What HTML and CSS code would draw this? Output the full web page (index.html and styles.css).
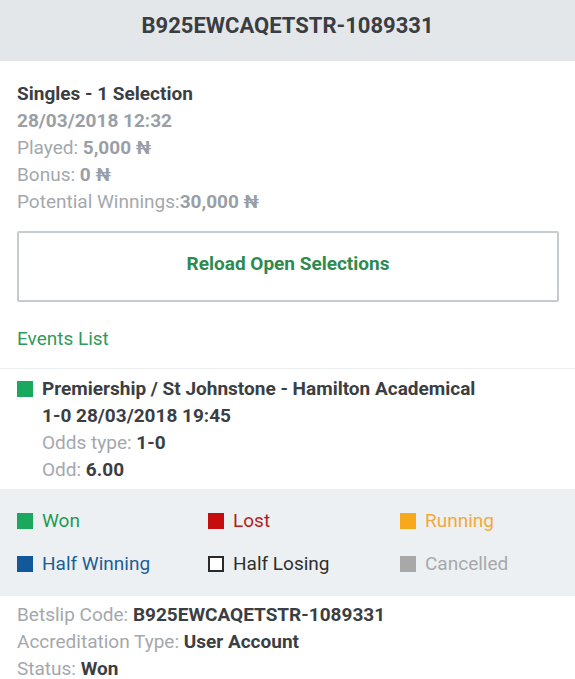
FILE: index.html
```html
<!DOCTYPE html>
<html lang="en">
<head>
  <meta charset="utf-8">
  <title>Betslip B925EWCAQETSTR-1089331</title>
  <link rel="stylesheet" href="styles.css">
</head>
<body>

  <header class="slip-header">B925EWCAQETSTR-1089331</header>

  <section class="slip-summary">
    <div class="slip-type">Singles - 1 Selection</div>
    <div class="slip-date">28/03/2018 12:32</div>
    <div class="slip-row">Played: <b>5,000 ₦</b></div>
    <div class="slip-row">Bonus: <b>0 ₦</b></div>
    <div class="slip-row">Potential Winnings:<b>30,000 ₦</b></div>

    <button class="reload-button">Reload Open Selections</button>

    <div class="events-title">Events List</div>
  </section>

  <section class="event">
    <span class="swatch swatch-won"></span>
    <div class="event-body">
      <div class="event-name">Premiership / St Johnstone - Hamilton Academical</div>
      <div class="event-name">1-0 28/03/2018 19:45</div>
      <div class="event-row">Odds type: <b>1-0</b></div>
      <div class="event-row">Odd: <b>6.00</b></div>
    </div>
  </section>

  <section class="legend">
    <div class="legend-item legend-won"><span class="swatch swatch-won"></span>Won</div>
    <div class="legend-item legend-lost"><span class="swatch swatch-lost"></span>Lost</div>
    <div class="legend-item legend-running"><span class="swatch swatch-running"></span>Running</div>
    <div class="legend-item legend-halfwin"><span class="swatch swatch-halfwin"></span>Half Winning</div>
    <div class="legend-item legend-halflose"><span class="swatch swatch-halflose"></span>Half Losing</div>
    <div class="legend-item legend-cancel"><span class="swatch swatch-cancel"></span>Cancelled</div>
  </section>

  <section class="slip-footer">
    <div class="event-row">Betslip Code: <b>B925EWCAQETSTR-1089331</b></div>
    <div class="event-row">Accreditation Type: <b>User Account</b></div>
    <div class="event-row">Status: <b>Won</b></div>
  </section>

</body>
</html>
```

FILE: styles.css
```css
body {
  margin: 0;
  padding: 0;
  font-family: Roboto, "Liberation Sans", sans-serif;
  font-size: 19px;
  line-height: 27px;
  color: #3b3e42;
  background: #fff;
}

.slip-header {
  height: 61px;
  background-color: #e4e7ea;
  display: flex;
  align-items: center;
  justify-content: center;
  font-size: 22px;
  font-weight: 700;
  color: #3a3d41;
  padding-bottom: 10px;
  box-sizing: border-box;
}

.slip-summary {
  padding: 19px 16px 0 17px;
}

.slip-type {
  font-weight: 700;
  color: #3b3e42;
}

.slip-date {
  font-weight: 700;
  color: #9a9fa5;
}

.slip-row {
  color: #a4a8ad;
}

.slip-row b {
  color: #9a9fa5;
}

.reload-button {
  display: block;
  width: 100%;
  height: 71px;
  margin-top: 16px;
  padding: 0 0 6px;
  background: #fff;
  border: 2px solid #c6cbd0;
  border-radius: 2px;
  font-family: inherit;
  font-size: 19px;
  font-weight: 700;
  color: #2e8a4e;
  cursor: pointer;
}

.events-title {
  color: #2f9a5c;
  padding: 23px 0 16px;
}

.event {
  display: flex;
  gap: 9px;
  padding: 6px 17px 6px;
  border-top: 1px solid #eceef0;
}

.event-body {
  display: flex;
  flex-direction: column;
}

.event-name {
  font-weight: 700;
}

.event-row {
  color: #a4a8ad;
}

.event-row b {
  color: #3b3e42;
}

.event .swatch {
  margin-top: 6px;
}

.swatch {
  display: inline-block;
  flex: none;
  width: 16px;
  height: 16px;
  box-sizing: border-box;
}

.swatch-won { background: #1aa85c; }
.swatch-lost { background: #c50d0d; }
.swatch-running { background: #f8a91b; }
.swatch-halfwin { background: #12589b; }
.swatch-halflose { background: #fff; border: 2px solid #2a2a2a; }
.swatch-cancel { background: #a8a8a8; }

.legend {
  display: grid;
  grid-template-columns: 191px 192px 1fr;
  row-gap: 16px;
  padding: 18px 17px 19px;
  background-color: #edf0f2;
}

.legend-item {
  display: flex;
  align-items: center;
  gap: 9px;
}

.legend-won { color: #1e9a57; }
.legend-lost { color: #b51c1c; }
.legend-running { color: #f2a93a; }
.legend-halfwin { color: #1c5e94; }
.legend-halflose { color: #2e2e2e; }
.legend-cancel { color: #a6a9ac; }

.slip-footer {
  padding: 5px 17px 0;
}
```
